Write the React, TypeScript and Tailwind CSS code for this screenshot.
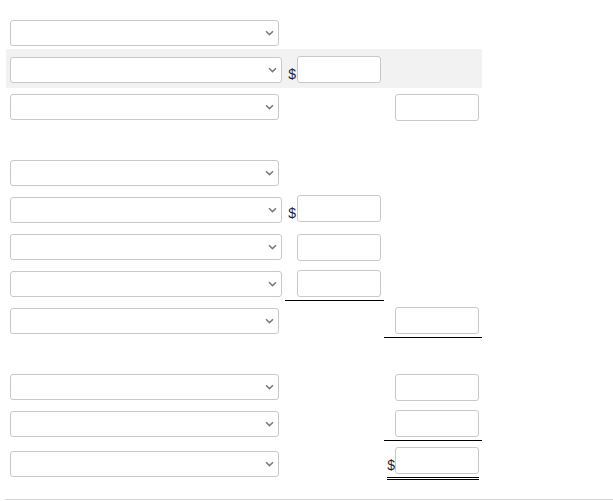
import React from "react";

const font = { fontFamily: '"Liberation Sans", Arial, sans-serif' };

function Select({ wide, mt }: { wide?: boolean; mt: string }) {
  return (
    <div
      className={`relative h-[26px] rounded-[3px] border border-[#c8c8c8] bg-white ${wide ? "w-[272px]" : "w-[269px]"} ${mt}`}
    >
      <svg
        className="absolute right-[4px] top-[9px]"
        width="9"
        height="6"
        viewBox="0 0 9 6"
        fill="none"
      >
        <path d="M1 1.2 L4.5 4.6 L8 1.2" stroke="#7a7a7a" strokeWidth="1.5" />
      </svg>
    </div>
  );
}

function Input() {
  return <div className="h-[27px] w-[84px] rounded-[3px] border border-[#c8c8c8] bg-white" />;
}

function Dollar() {
  return <span className="relative top-[3px] text-[14px] leading-[13px] text-[#1e1e3c]">$</span>;
}

export default function App() {
  return (
    <div className="relative h-[501px] w-[613px] bg-white" style={font}>
      <div className="flex w-[476px] flex-col pl-[0px] ml-[6px] pt-[15px]">
        {/* Row 1 */}
        <div className="flex h-[34px]">
          <div className="w-[279px] pl-[4px]">
            <Select mt="mt-[5px]" />
          </div>
        </div>
        {/* Row 2 band */}
        <div className="flex h-[39px] bg-[#f2f2f2]">
          <div className="w-[279px] pl-[4px]">
            <Select wide mt="mt-[8px]" />
          </div>
          <div className="flex w-[99px] items-end justify-end pr-[3px] h-[34px]">
            <span className="mr-[1px]"><Dollar /></span>
            <Input />
          </div>
        </div>
        {/* Row 3 */}
        <div className="flex h-[37px]">
          <div className="w-[279px] pl-[4px]">
            <Select mt="mt-[6px]" />
          </div>
          <div className="w-[99px]" />
          <div className="flex w-[98px] justify-end pr-[3px] pt-[6px]">
            <Input />
          </div>
        </div>
        <div className="h-[29px]" />
        {/* Row 4 */}
        <div className="flex h-[37px]">
          <div className="w-[279px] pl-[4px]">
            <Select mt="mt-[6px]" />
          </div>
        </div>
        {/* Row 5 */}
        <div className="flex h-[37px]">
          <div className="w-[279px] pl-[4px]">
            <Select wide mt="mt-[6px]" />
          </div>
          <div className="flex h-[31px] w-[99px] items-end justify-end pr-[3px]">
            <span className="mr-[1px]"><Dollar /></span>
            <Input />
          </div>
        </div>
        {/* Row 6 */}
        <div className="flex h-[37px]">
          <div className="w-[279px] pl-[4px]">
            <Select wide mt="mt-[6px]" />
          </div>
          <div className="flex w-[99px] justify-end pr-[3px] pt-[6px]">
            <Input />
          </div>
        </div>
        {/* Row 7 */}
        <div className="flex h-[37px]">
          <div className="w-[279px] pl-[4px]">
            <Select wide mt="mt-[6px]" />
          </div>
          <div className="flex h-[36px] w-[99px] justify-end border-b border-black pr-[3px] pt-[5px]">
            <Input />
          </div>
        </div>
        {/* Row 8 */}
        <div className="flex h-[37px]">
          <div className="w-[279px] pl-[4px]">
            <Select mt="mt-[6px]" />
          </div>
          <div className="w-[99px]" />
          <div className="flex h-[36px] w-[98px] justify-end border-b border-black pr-[3px] pt-[5px]">
            <Input />
          </div>
        </div>
        <div className="h-[29px]" />
        {/* Row 9 */}
        <div className="flex h-[37px]">
          <div className="w-[279px] pl-[4px]">
            <Select mt="mt-[6px]" />
          </div>
          <div className="w-[99px]" />
          <div className="flex w-[98px] justify-end pr-[3px] pt-[6px]">
            <Input />
          </div>
        </div>
        {/* Row 10 */}
        <div className="flex h-[37px]">
          <div className="w-[279px] pl-[4px]">
            <Select mt="mt-[6px]" />
          </div>
          <div className="w-[99px]" />
          <div className="flex h-[36px] w-[98px] justify-end border-b border-black pr-[3px] pt-[5px]">
            <Input />
          </div>
        </div>
        {/* Row 11 */}
        <div className="flex h-[42px]">
          <div className="w-[279px] pl-[4px]">
            <Select mt="mt-[9px]" />
          </div>
          <div className="w-[99px]" />
          <div className="mx-[3px] flex h-[38px] w-[92px] items-end justify-end border-b-[3px] border-double border-black pb-[3px]">
            <span className="mr-[0px]"><Dollar /></span>
            <Input />
          </div>
        </div>
      </div>
      <div className="absolute left-[5px] right-0 top-[499px] h-px bg-[#d3d6da]" />
    </div>
  );
}
